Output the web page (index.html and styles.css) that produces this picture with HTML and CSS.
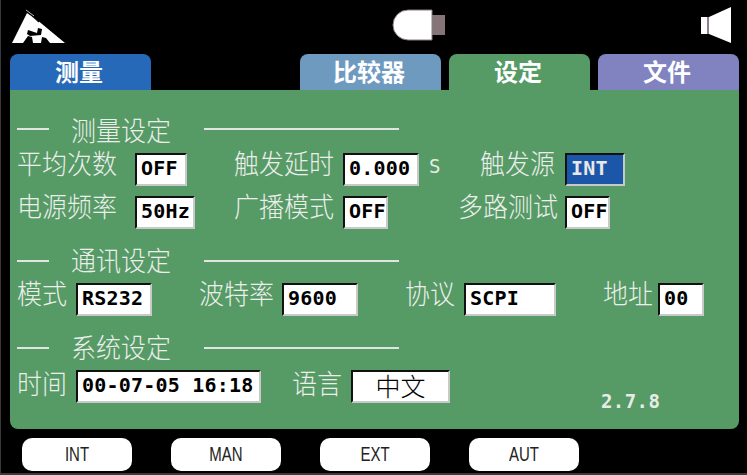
FILE: index.html
```html
<!DOCTYPE html>
<html lang="zh">
<head>
  <meta charset="UTF-8">
  <title>设定</title>
  <link rel="stylesheet" href="styles.css">
</head>
<body>

<div class="screen">
  <div class="topbar">
    <svg class="logo" width="55" height="36" viewBox="11 9 55 36">
      <polygon fill="#fff" points="12,43 27,13 36,19 65,43 50,43 46,38 42,37 41,43 33,43 32,37 28,36 23,43"/>
      <polygon fill="#000" points="28,30 37,33 38,28 42,29 41,35 30,36 27,34"/>
      <line x1="27" y1="11" x2="39" y2="22" stroke="#000" stroke-width="1.2"/>
      <line x1="26" y1="10" x2="34" y2="16" stroke="#bbb" stroke-width="1"/>
    </svg>
    <svg class="usb" width="54" height="32" viewBox="0 0 54 32">
      <rect x="39" y="6" width="14" height="20" fill="#857478"/>
      <path d="M40 1H16A15 15 0 0 0 1 16A15 15 0 0 0 16 31H40Z" fill="#fff" stroke="#8a7c80" stroke-width="1"/>
    </svg>
    <svg class="speaker" width="31" height="37" viewBox="0 0 31 37">
      <rect x="0" y="10" width="6" height="17" fill="#fff"/>
      <rect x="6" y="10" width="2" height="17" fill="#8a8090"/>
      <polygon fill="#fff" points="8,10 30,0 30,36 8,27"/>
    </svg>
  </div>

  <!-- tabs -->
  <div class="tabs">
    <div class="tab tab-blue">测量</div>
    <div class="tab tab-steel">比较器</div>
    <div class="tab tab-green">设定</div>
    <div class="tab tab-purple">文件</div>
  </div>

  <div class="panel">
    <div class="heading">
      <span class="dash"></span><span class="title">测量设定</span><span class="rule"></span>
    </div>
    <div class="measure">
      <span class="label">平均次数</span>
      <div class="cell cell-a"><span class="field w52">OFF</span></div>
      <span class="label">触发延时</span>
      <div class="cell cell-b"><span class="field w76">0.000</span><span class="unit">S</span></div>
      <span class="label">触发源</span>
      <div class="cell cell-c"><span class="field w60 selected">INT</span></div>

      <span class="label">电源频率</span>
      <div class="cell cell-a"><span class="field w60">50Hz</span></div>
      <span class="label">广播模式</span>
      <div class="cell cell-b"><span class="field w45">OFF</span></div>
      <span class="label">多路测试</span>
      <div class="cell cell-c"><span class="field w45">OFF</span></div>
    </div>

    <div class="heading heading-next">
      <span class="dash"></span><span class="title">通讯设定</span><span class="rule"></span>
    </div>
    <div class="row">
      <span class="label">模式</span>
      <span class="field w76 ml9">RS232</span>
      <span class="label ml47">波特率</span>
      <span class="field w76 ml8">9600</span>
      <span class="label ml47">协议</span>
      <span class="field w92 ml9">SCPI</span>
      <span class="label ml47">地址</span>
      <span class="field w46 ml5">00</span>
    </div>

    <div class="heading heading-next">
      <span class="dash"></span><span class="title">系统设定</span><span class="rule"></span>
    </div>
    <div class="row row-time">
      <span class="label">时间</span>
      <span class="field w185 ml9">00-07-05 16:18</span>
      <span class="label ml31">语言</span>
      <span class="field w99 ml9 lang">中文</span>
      <span class="version">2.7.8</span>
    </div>
  </div>

  <div class="softkeys">
    <div class="key"><span>INT</span></div>
    <div class="key"><span>MAN</span></div>
    <div class="key"><span>EXT</span></div>
    <div class="key"><span>AUT</span></div>
  </div>
</div>

</body>
</html>
```

FILE: styles.css
```css
* {
  box-sizing: border-box;
}
body {
  margin: 0;
  background: #000;
  font-family: "Noto Sans CJK SC", "Liberation Sans", sans-serif;
}
.screen {
  width: 747px;
  height: 475px;
  overflow: hidden;
  border-left: 1px solid #3a3a3a;
  border-bottom: 2px solid #3a3a3a;
  background: #000;
}

.topbar {
  display: flex;
  height: 54px;
}
.logo {
  margin: 9px 0 0 10px;
}
.usb {
  margin: 9px 0 0 326px;
}
.speaker {
  margin: 7px 0 0 255px;
}

.tabs {
  display: flex;
  height: 36px;
  margin-left: 9px;
}
.tab {
  width: 141px;
  margin-right: 8px;
  padding-right: 3px;
  border-radius: 8px 8px 0 0;
  color: #fff;
  font-size: 24px;
  font-weight: 700;
  line-height: 34px;
  text-align: center;
}
.tab-blue {
  background: #2669b8;
  margin-right: 149px;
}
.tab-steel {
  background: #6f9ac0;
}
.tab-green {
  background: #569a65;
}
.tab-purple {
  background: #8083c0;
  margin-right: 0;
}

.panel {
  width: 729px;
  height: 339px;
  margin-left: 9px;
  padding: 27px 0 0 7px;
  background: #569a65;
  border-radius: 0 0 8px 8px;
}

.heading {
  display: flex;
  align-items: center;
  height: 28px;
}
.heading-next {
  margin-top: 20px;
}
.dash,
.rule {
  height: 2px;
  margin-bottom: 4px;
  background: #e2e6e2;
}
.dash {
  width: 32px;
}
.rule {
  width: 195px;
}
.title {
  align-self: flex-start;
  width: 155px;
  padding-left: 22px;
  color: #eceeec;
  font-size: 25px;
  font-weight: 300;
  line-height: 24px;
  transform: scaleY(1.1);
}
.heading-next .title {
  line-height: 20px;
}

.measure {
  display: grid;
  grid-template-columns: 98px 119px 98px 126px 97px auto;
  grid-auto-rows: 33px;
  row-gap: 10px;
  margin-top: 8px;
}
.measure .label {
  text-align: right;
}
.cell {
  display: flex;
}
.cell-a {
  padding-left: 20px;
}
.cell-b {
  padding-left: 11px;
}
.cell-c {
  padding-left: 10px;
}

.row {
  display: flex;
  height: 33px;
  margin-top: 6px;
}

.label {
  color: #eceeec;
  font-size: 25px;
  font-weight: 300;
  line-height: 21px;
  white-space: nowrap;
  transform: scaleY(1.1);
}
.row-time .label {
  line-height: 25px;
}

.field {
  display: block;
  height: 33px;
  padding-left: 4px;
  border: 2px solid;
  border-color: #111 #c9c9c9 #c9c9c9 #111;
  background: #fff;
  color: #000;
  font-family: "DejaVu Sans Mono", "Liberation Mono", monospace;
  font-size: 20px;
  font-weight: 700;
  letter-spacing: 0.2px;
  line-height: 27px;
  white-space: pre;
}
.selected {
  background: #1c56a8;
  color: #e8e8e8;
}
.lang {
  padding: 0;
  font-family: "Noto Sans CJK SC", sans-serif;
  font-size: 25px;
  font-weight: 300;
  letter-spacing: 0;
  text-align: center;
}
.unit {
  margin: 1px 0 0 10px;
  color: #e8ece8;
  font-family: "DejaVu Sans Mono", monospace;
  font-size: 19px;
  line-height: 24px;
}
.version {
  margin: 21px 0 0 151px;
  color: #e8ece8;
  font-family: "DejaVu Sans Mono", monospace;
  font-size: 19px;
  font-weight: 700;
  letter-spacing: 0.4px;
  line-height: 20px;
}

.w45 { width: 45px; }
.w46 { width: 46px; }
.w52 { width: 52px; }
.w60 { width: 60px; }
.w76 { width: 76px; }
.w92 { width: 92px; }
.w99 { width: 99px; }
.w185 { width: 185px; }
.ml5 { margin-left: 5px; }
.ml8 { margin-left: 8px; }
.ml9 { margin-left: 9px; }
.ml31 { margin-left: 31px; }
.ml47 { margin-left: 47px; }

.softkeys {
  display: flex;
  gap: 39px;
  margin: 9px 0 0 21px;
}
.key {
  width: 110px;
  height: 33px;
  border-radius: 10px;
  background: #fff;
  color: #222;
  font-family: "Liberation Sans", sans-serif;
  font-size: 15px;
  line-height: 31px;
  text-align: center;
}
.key span {
  display: inline-block;
  transform: scaleY(1.3);
}
```
